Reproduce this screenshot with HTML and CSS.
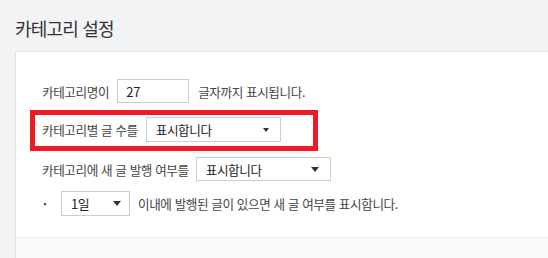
FILE: index.html
```html
<!DOCTYPE html>
<html lang="ko">

<head>
  <meta charset="UTF-8">
  <meta name="viewport" content="width=device-width, initial-scale=1.0">
  <title>카테고리 설정</title>
  <link rel="stylesheet" href="styles.css">
</head>

<body>
  <h1 class="page-title">카테고리 설정</h1>

  <div class="card">
    <div class="card-body">
      <div class="row">
        <label for="nameLen">카테고리명이</label>
        <input type="text" id="nameLen" class="num-input" value="27">
        <span>글자까지 표시됩니다.</span>
      </div>

      <div class="row highlight">
        <span>카테고리별 글 수를</span>
        <div class="select select-count">
          <span>표시합니다</span>
          <i class="arrow small"></i>
        </div>
      </div>

      <div class="row row-new">
        <span>카테고리에 새 글 발행 여부를</span>
        <div class="select select-new">
          <span>표시합니다</span>
          <i class="arrow"></i>
        </div>
      </div>

      <div class="row row-days">
        <span class="dot">·</span>
        <div class="select select-days">
          <span>1일</span>
          <i class="arrow"></i>
        </div>
        <span>이내에 발행된 글이 있으면 새 글 여부를 표시합니다.</span>
      </div>
    </div>
    <div class="card-foot"></div>
  </div>
</body>

</html>
```

FILE: styles.css
```css
body {
  margin: 0;
  background-color: #f2f3f5;
  font-family: "Noto Sans CJK KR", "Noto Sans", sans-serif;
  color: #333;
}

.page-title {
  margin: 0;
  padding: 16px 15px 0;
  height: 35px;
  font-size: 18px;
  font-weight: normal;
  line-height: 24px;
  letter-spacing: -0.8px;
  color: #333;
}

.card {
  margin-left: 15px;
  background-color: #fff;
  border-left: 1px solid #dfe2e6;
  border-top: 1px solid #dfe2e6;
}

.card-body {
  padding: 27px 0 21px 26px;
  font-size: 12.6px;
  letter-spacing: -0.4px;
  color: #444;
}

.row {
  display: flex;
  align-items: center;
  gap: 8px;
}

.num-input {
  width: 72px;
  height: 24px;
  box-sizing: border-box;
  border: 1px solid #c7ced7;
  padding: 0 8px;
  font-family: inherit;
  font-size: 13px;
  color: #222;
  outline: none;
}

.num-input + span {
  margin-left: 1px;
}

.highlight {
  margin: 7px 0 0 -12px;
  width: 288px;
  height: 41px;
  box-sizing: border-box;
  border: 5px solid #ed1c24;
  padding: 0 0 2px 7px;
  gap: 8px;
}

.select {
  display: flex;
  align-items: center;
  justify-content: space-between;
  box-sizing: border-box;
  border: 1px solid #c7ced7;
  background-color: #fff;
  padding: 0 8px 0 9px;
  color: #222;
}

.select-count {
  width: 135px;
  height: 25px;
  padding-right: 11px;
}

.row-new {
  margin-top: 6px;
  gap: 7px;
}

.select-new {
  width: 135px;
  height: 24px;
  padding-right: 11px;
}

.row-days {
  margin-top: 10px;
}

.dot {
  width: 10px;
  margin-left: 1px;
  font-weight: bold;
}

.select-days {
  width: 69px;
  height: 25px;
  font-size: 13px;
}

.arrow {
  width: 0;
  height: 0;
  border-left: 4px solid transparent;
  border-right: 4px solid transparent;
  border-top: 5px solid #333;
}

.arrow.small {
  border-left-width: 3px;
  border-right-width: 3px;
  border-top-width: 4px;
}

.card-foot {
  height: 21px;
  border-top: 1px solid #eceef1;
  background-color: #f8f9fb;
}
```
